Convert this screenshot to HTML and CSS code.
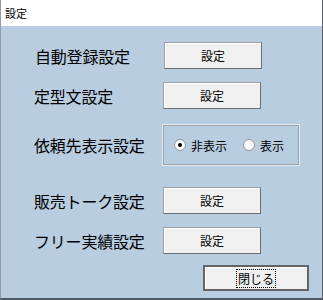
FILE: index.html
```html
<!DOCTYPE html>
<html lang="ja">
<head>
<meta charset="utf-8">
<link rel="stylesheet" href="styles.css">
</head>
<body>
<div class="window">
  <div class="titlebar">設定</div>
  <div class="client">
    <div class="row r1">
      <span class="label">自動登録設定</span>
      <button class="btn">設定</button>
    </div>
    <div class="row r2">
      <span class="label">定型文設定</span>
      <button class="btn">設定</button>
    </div>
    <div class="row r3">
      <span class="label">依頼先表示設定</span>
      <div class="group">
        <label class="radio"><span class="dot checked"></span>非表示</label>
        <label class="radio"><span class="dot"></span>表示</label>
      </div>
    </div>
    <div class="row r4">
      <span class="label">販売トーク設定</span>
      <button class="btn">設定</button>
    </div>
    <div class="row r5">
      <span class="label">フリー実績設定</span>
      <button class="btn">設定</button>
    </div>
    <div class="footer">
      <button class="btn close"><span class="focus">閉じる</span></button>
    </div>
  </div>
</div>
</body>
</html>
```
FILE: styles.css
```css
html, body {
  margin: 0;
  padding: 0;
  background: #6e7b86;
}
body {
  width: 323px;
  height: 300px;
  overflow: hidden;
  font-family: "Noto Sans CJK JP", "Noto Sans", sans-serif;
}
.window {
  border-left: 1px solid #8f9aa4;
  border-right: 1px solid #55606a;
  border-bottom: 2px solid #4f5a64;
  box-sizing: border-box;
  width: 323px;
  height: 300px;
  display: flex;
  flex-direction: column;
  background: #b9cde1;
}
.titlebar {
  height: 26px;
  background: #ffffff;
  font-size: 11px;
  line-height: 26px;
  padding-left: 4px;
  color: #000;
  flex: none;
}
.client {
  flex: 1;
  padding-top: 16px;
  display: flex;
  flex-direction: column;
}
.row {
  display: flex;
  align-items: center;
  height: 27px;
}
.label {
  width: 129px;
  padding-left: 33px;
  font-size: 16px;
  line-height: 20px;
  color: #000;
  white-space: nowrap;
  letter-spacing: -0.2px;
}
.r1 .label { padding-left: 34px; }
.r2 { margin-top: 13px; }
.r3 { margin-top: 15px; height: 42px; }
.r4 { margin-top: 21px; }
.r5 { margin-top: 13px; }
.btn {
  width: 98px;
  height: 27px;
  margin: 0;
  padding: 0;
  background: #f0f0f0;
  border: 1px solid #a0a0a0;
  border-right-color: #6d6d6d;
  border-bottom-color: #6d6d6d;
  box-shadow: inset 1px 1px 0 #ffffff;
  font-family: "Noto Sans CJK JP", sans-serif;
  font-size: 12px;
  color: #000;
}
.group {
  width: 138px;
  height: 42px;
  box-sizing: border-box;
  border: 1px solid #e8eef4;
  box-shadow: 0 0 0 1px #9aa3ab inset;
  display: flex;
  align-items: center;
  padding-left: 11px;
  gap: 16px;
  margin-left: -1px;
}
.radio {
  display: flex;
  align-items: center;
  font-size: 12px;
  gap: 5px;
  color: #000;
}
.dot {
  width: 12px;
  height: 12px;
  border-radius: 50%;
  box-sizing: border-box;
  border: 1px solid #9a9a9a;
  background: radial-gradient(circle, #ffffff 40%, #e6e6e6 100%);
  position: relative;
}
.dot.checked::after {
  content: "";
  position: absolute;
  left: 3px;
  top: 3px;
  width: 4px;
  height: 4px;
  border-radius: 50%;
  background: #000;
}
.footer {
  display: flex;
  justify-content: flex-end;
  padding-right: 13px;
  margin-top: 11px;
}
.btn.close {
  width: 106px;
  height: 26px;
  border: 2px solid #646464;
  box-shadow: inset 1px 1px 0 #ffffff;
}
.focus {
  outline: 1px dotted #000;
  outline-offset: 0;
  padding: 0 1px;
}
```
